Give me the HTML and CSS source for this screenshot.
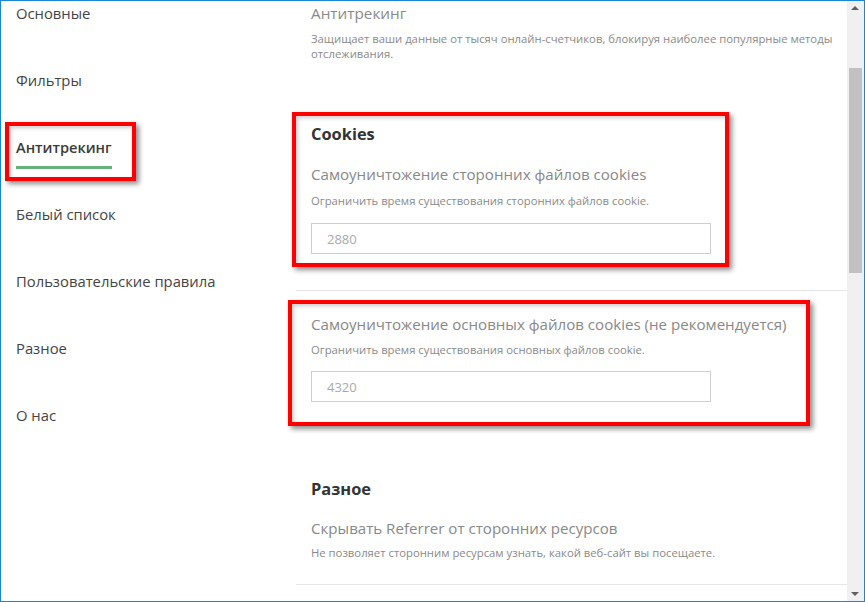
FILE: index.html
```html
<!DOCTYPE html>
<html lang="ru">
<head>
  <meta charset="UTF-8" />
  <title>Настройки - Антитрекинг</title>
  <link rel="stylesheet" href="styles.css">
</head>
<body>
  <div class="window">
    <nav class="sidebar">
      <a href="#">Основные</a>
      <a href="#">Фильтры</a>
      <a href="#" class="active"><span>Антитрекинг</span></a>
      <a href="#">Белый список</a>
      <a href="#">Пользовательские правила</a>
      <a href="#">Разное</a>
      <a href="#">О нас</a>
      <div class="mark mark-nav"></div>
    </nav>

    <main class="content">
      <div class="intro">
        <h1>Антитрекинг</h1>
        <p class="desc">Защищает ваши данные от тысяч онлайн-счетчиков, блокируя наиболее популярные методы отслеживания.</p>
      </div>

      <section class="group cookies">
        <h2>Cookies</h2>
        <div class="label">Самоуничтожение сторонних файлов cookies</div>
        <p class="desc">Ограничить время существования сторонних файлов cookie.</p>
        <input type="text" placeholder="2880">
      </section>

      <section class="group plain">
        <div class="label">Самоуничтожение основных файлов cookies (не рекомендуется)</div>
        <p class="desc">Ограничить время существования основных файлов cookie.</p>
        <input type="text" placeholder="4320">
      </section>

      <section class="group misc">
        <h2>Разное</h2>
        <div class="label">Скрывать Referrer от сторонних ресурсов</div>
        <p class="desc">Не позволяет сторонним ресурсам узнать, какой веб-сайт вы посещаете.</p>
      </section>

      <!-- красные рамки-выделения поверх скриншота -->
      <div class="mark mark-cookies"></div>
      <div class="mark mark-plain"></div>
    </main>

    <div class="scrollbar">
      <span class="arrow up"></span>
      <div class="thumb"></div>
      <span class="arrow down"></span>
    </div>
  </div>
</body>
</html>
```

FILE: styles.css
```css
* { box-sizing: border-box; }
html, body {
  margin: 0;
  height: 100%;
  overflow: hidden;
}
body {
  font-family: 'Open Sans', 'Noto Sans', sans-serif;
  background: #fff;
  color: #444;
}
.window {
  height: 602px;
  width: 865px;
  border: 1px solid #1a86d8;
  display: flex;
  overflow: hidden;
}

/* меню слева */
.sidebar {
  position: relative;
  width: 295px;
  flex-shrink: 0;
  padding-top: 2px;
}
.sidebar a {
  display: block;
  height: 67px;
  padding-left: 15px;
  font-size: 14.8px;
  line-height: 20px;
  color: #444;
  text-decoration: none;
}
.sidebar a.active span {
  display: inline-block;
  font-weight: 600;
  font-size: 14.6px;
  color: #3a3a3a;
  padding-bottom: 9px;
  border-bottom: 3px solid #67b279;
}

/* основная часть */
.content {
  position: relative;
  flex: 1;
  padding-top: 2px;
}
.intro {
  padding-left: 15px;
  height: 120px;
}
h1 {
  margin: 0;
  font-size: 15.3px;
  font-weight: normal;
  line-height: 20px;
  color: #8a8a8a;
}
.desc {
  margin: 8px 0 0;
  font-size: 11.3px;
  line-height: 15px;
  color: #8a8a8a;
}
.intro .desc { padding-right: 10px; }
h2 {
  margin: 0;
  font-size: 16.4px;
  font-weight: 700;
  line-height: 22px;
  color: #333;
}
.label {
  font-size: 15.1px;
  line-height: 20px;
  color: #888;
}
.group {
  padding-left: 15px;
}
.group input {
  display: block;
  width: 400px;
  height: 31px;
  margin-top: 14px;
  border: 1px solid #cfcfcf;
  padding: 0 15px;
  font-family: inherit;
  font-size: 13px;
  color: #555;
}
.group input::placeholder { color: #aaa; }

.cookies {
  padding-bottom: 36px;
  border-bottom: 1px solid #e6e6e6;
}
.cookies .label { margin-top: 19px; }
.cookies .desc { margin-top: 9px; }
.cookies input { margin-top: 15px; }
.plain { padding-top: 23px; }
.misc {
  padding-top: 76px;
  padding-bottom: 24px;
  border-bottom: 1px solid #e6e6e6;
}
.misc .label { margin-top: 18px; }
.misc .desc { margin-top: 7px; }

/* красные рамки */
.mark {
  position: absolute;
  border: 4px solid #ff0000;
  box-shadow: 3px 3px 5px rgba(0,0,0,0.45), inset 2px 2px 4px rgba(0,0,0,0.2);
}
.mark-nav { left: 4px; top: 121px; width: 131px; height: 59px; }
.mark-cookies { left: -4px; top: 111px; width: 437px; height: 155px; }
.mark-plain { left: -8px; top: 299px; width: 522px; height: 126px; }

/* полоса прокрутки */
.scrollbar {
  position: relative;
  width: 17px;
  flex-shrink: 0;
  background: #f0f0f0;
}
.thumb {
  margin: 67px 2px 0;
  height: 205px;
  background: #c1c1c1;
}
.arrow {
  position: absolute;
  left: 4px;
  width: 0;
  height: 0;
  border-left: 4px solid transparent;
  border-right: 4px solid transparent;
}
.arrow.up { top: 5px; border-bottom: 4px solid #606060; }
.arrow.down { bottom: 5px; border-top: 4px solid #606060; }
```
